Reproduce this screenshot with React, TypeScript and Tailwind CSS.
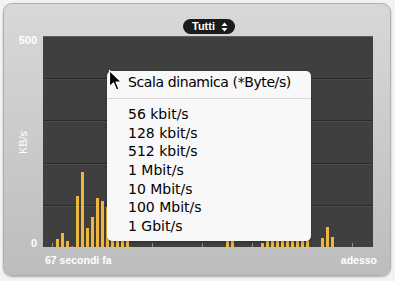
import React from 'react'

// bar heights in px, one slot every 5px starting 13px into the chart
const bars: number[] = [
  8, 14, 6, 1, 51, 75, 19, 30, 49, 46, 40, 10, 8, 12, 6,
  0, 0, 0, 0, 0, 0, 0, 0, 0, 0, 0, 0, 0, 0, 0, 0, 0, 0, 0,
  6, 8, 0, 0, 0, 0, 0, 4, 8, 8, 8, 8, 8, 8, 8, 8, 8, 0, 0, 9, 20, 10,
]

const speeds = [
  '56 kbit/s',
  '128 kbit/s',
  '512 kbit/s',
  '1 Mbit/s',
  '10 Mbit/s',
  '100 Mbit/s',
  '1 Gbit/s',
]

const ChartCanvas = () => (
  <svg width="330" height="211" viewBox="0 0 330 211" className="block">
    <rect x="0" y="0" width="330" height="211" fill="#3f3f3f" />
    <rect x="0" y="0" width="330" height="1" fill="#5c5c5c" />
    {[42, 84, 127, 169].map((y) => (
      <g key={y}>
        <rect x="0" y={y} width="330" height="1" fill="#2b2b2b" />
        <rect x="0" y={y + 1} width="330" height="1" fill="#4b4b4b" />
      </g>
    ))}
    {[9, 59, 109, 159, 209, 259, 309].map((x) => (
      <rect key={x} x={x} y="207" width="1" height="4" fill="#8c8c8c" />
    ))}
    {bars.map((h, i) =>
      h > 0 ? (
        <rect
          key={i}
          x={13 + i * 5}
          y={211 - h}
          width="3"
          height={h}
          fill={h < 2 ? '#7a7a7a' : '#efb63c'}
        />
      ) : null
    )}
  </svg>
)

const Cursor = () => (
  <svg width="16" height="24" viewBox="0 0 16 24">
    <path
      d="M1.5 1.5 L1.5 18 L5.5 14 L8.5 21 L11 20 L8 13 L13.5 13 Z"
      fill="#000"
      stroke="#fff"
      strokeWidth="1.2"
      strokeLinejoin="round"
    />
  </svg>
)

export default function App() {
  return (
    <div
      className="relative w-[395px] h-[281px] bg-[#f3f3f3] overflow-hidden"
      style={{ fontFamily: '"Liberation Sans", Arial, sans-serif' }}
    >
      {/* gray panel */}
      <div className="ml-[3px] mt-[3px] w-[388px] h-[273px] rounded-[9px] bg-gradient-to-b from-[#d8d8d8] to-[#bdbdbd] border border-[#b0b0b0] shadow-[0_1px_2px_rgba(0,0,0,0.3)] flex flex-col">
        {/* filter pill */}
        <div className="h-[32px] pl-[179px] pt-[15px]">
          <div className="w-[52px] h-[15px] rounded-full bg-[#1b1b1b] flex items-center pl-[9px] gap-[6px]">
            <span className="text-[11px] leading-[11px] font-bold text-white">Tutti</span>
            <svg width="7" height="10" viewBox="0 0 7 10">
              <path d="M3.5 0.5 L6.5 4 L0.5 4 Z" fill="#fff" />
              <path d="M3.5 9.5 L6.5 6 L0.5 6 Z" fill="#fff" />
            </svg>
          </div>
        </div>

        {/* chart row */}
        <div className="flex h-[211px]">
          <div className="w-[39px] flex flex-col justify-between items-end pr-[6px] text-white">
            <span className="text-[11px] leading-[11px] font-bold mt-[-1px]">500</span>
            <span className="self-center ml-[7px] -rotate-90 text-[11px] leading-[11px] whitespace-nowrap">
              KB/s
            </span>
            <span className="text-[11px] leading-[11px] font-bold mb-[-2px]">0</span>
          </div>
          <ChartCanvas />
        </div>

        {/* time labels */}
        <div className="flex justify-between pl-[41px] pr-[13px] mt-[8px] text-white text-[11px] leading-[11px]">
          <span className="font-bold text-[10.5px]">67 secondi fa</span>
          <span className="font-bold text-[10.5px]">adesso</span>
        </div>
      </div>

      {/* popup menu */}
      <div
        className="absolute left-[107px] top-[71px] w-[204px] h-[170px] rounded-[5px] bg-[#f8f8f8] shadow-[0_1px_3px_rgba(0,0,0,0.3)] pt-[2px] text-[14px] text-black"
        style={{ fontFamily: '"DejaVu Sans", "Liberation Sans", sans-serif' }}
      >
        <div className="h-[19px] leading-[19px] pl-[21px] tracking-[-0.4px] whitespace-nowrap">
          Scala dinamica (*Byte/s)
        </div>
        <div className="mt-[6px] h-px bg-[#dadada]" />
        <div className="mt-[6px] pl-[21px]">
          {speeds.map((s) => (
            <div key={s} className="h-[18.7px] leading-[18.7px] whitespace-nowrap">
              {s}
            </div>
          ))}
        </div>
      </div>

      {/* mouse pointer */}
      <div className="absolute left-[108px] top-[69px]">
        <Cursor />
      </div>
    </div>
  )
}
